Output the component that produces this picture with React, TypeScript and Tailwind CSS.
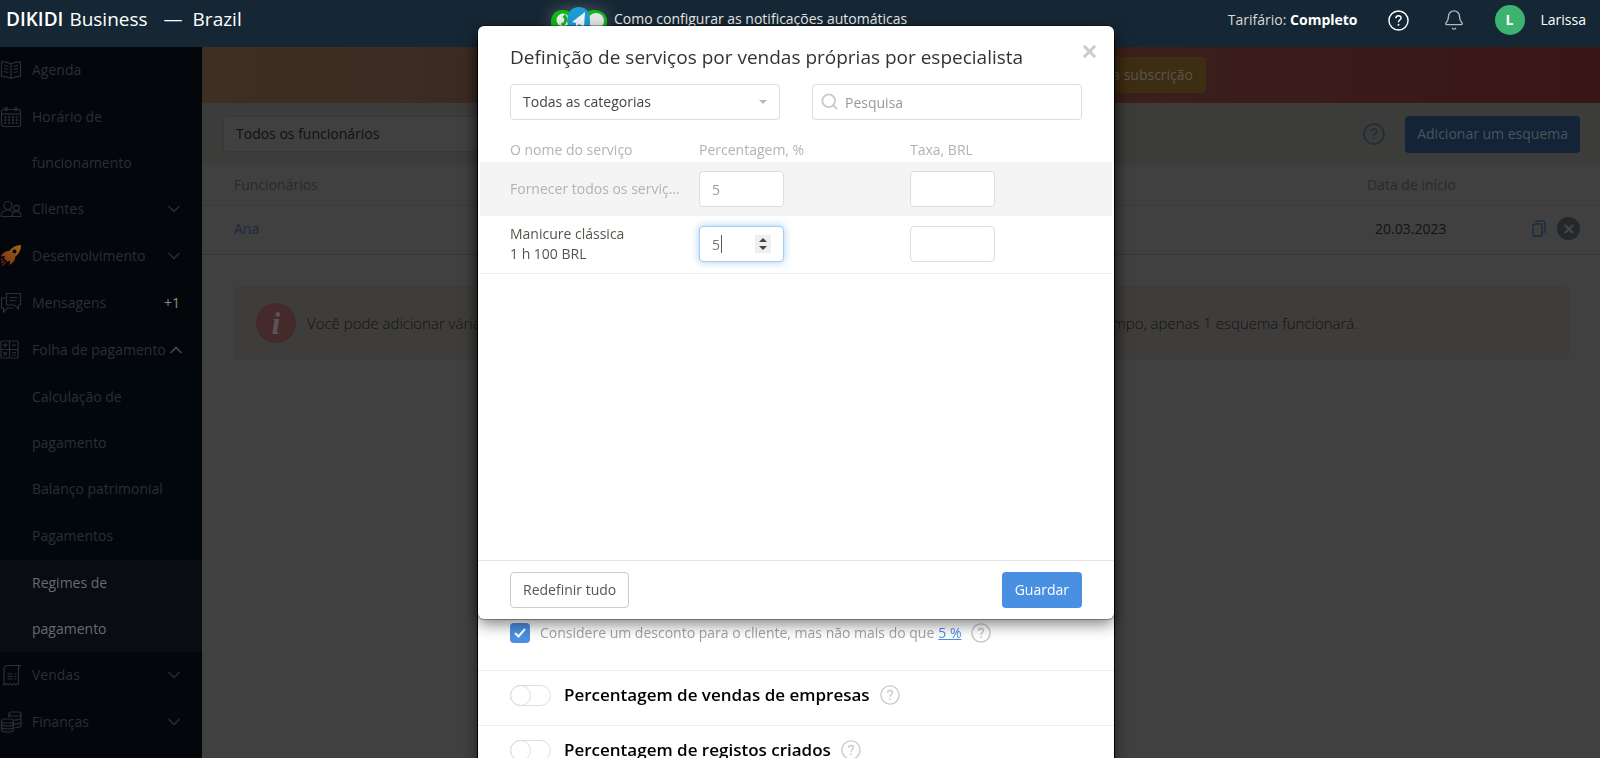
import type { ReactNode } from "react";
import { Bell, ChevronDown, ChevronUp, Search, X } from "lucide-react";

type IconName = "book" | "calendar" | "users" | "rocket" | "chat" | "calc" | "receipt" | "coins";

interface MenuItem {
  label: string;
  icon: IconName;
  wrap?: boolean;
  arrow?: "up" | "down";
  badge?: string;
}

interface SubItem {
  label: string;
  wrap?: boolean;
  active?: boolean;
}

const topItems: MenuItem[] = [
  { label: "Agenda", icon: "book" },
  { label: "Horário de funcionamento", icon: "calendar", wrap: true },
  { label: "Clientes", icon: "users", arrow: "down" },
  { label: "Desenvolvimento", icon: "rocket", arrow: "down" },
  { label: "Mensagens", icon: "chat", badge: "+1" },
  { label: "Folha de pagamento", icon: "calc", arrow: "up" },
];

const subItems: SubItem[] = [
  { label: "Calculação de pagamento", wrap: true },
  { label: "Balanço patrimonial" },
  { label: "Pagamentos" },
  { label: "Regimes de pagamento", wrap: true, active: true },
];

const bottomItems: MenuItem[] = [
  { label: "Vendas", icon: "receipt", arrow: "down" },
  { label: "Finanças", icon: "coins", arrow: "down" },
];

const icons: Record<IconName, ReactNode> = {
  book: (
    <>
      <path d="M11 5C8 3.4 5 2.8 1.5 3v14.500C5 17.300 8 18 11 19.500 14 18 17 17.300 20.500 17.500V3C17 2.800 14 3.400 11 5zM11 5v14" />
      <path d="M4 6.500l4.500 1M4 9.500l4.500 1M4 12.500l4.500 1M18 6.500l-4.500 1M18 9.500l-4.500 1M18 12.500l-4.500 1" />
    </>
  ),
  calendar: (
    <>
      <rect x="1.500" y="3.500" width="19" height="17" rx="2" />
      <path d="M1.500 8h19" />
      <circle cx="6" cy="3" r="1.500" />
      <circle cx="16" cy="3" r="1.500" />
      <path d="M4.500 11h13M4.500 14h13M4.500 17h13" strokeWidth="1.800" strokeDasharray="1.800 2" />
    </>
  ),
  users: (
    <>
      <circle cx="8" cy="7.500" r="4" />
      <path d="M1 18.500c0-4.500 3-6.500 7-6.500 2.500 0 4 .8 5.200 2.200M1 18.500h11" />
      <circle cx="16.500" cy="10" r="2.800" />
      <path d="M12 18.500c0-3.500 2-5 4.500-5s4.500 1.500 4.500 5z" />
    </>
  ),
  rocket: (
    <>
      <defs>
        <linearGradient id="rocket" x1="1" y1="0" x2="0" y2="1">
          <stop offset="0" stopColor="#a06a10" />
          <stop offset="1" stopColor="#7c2a14" />
        </linearGradient>
      </defs>
      <path
        d="M21 0c-5 0-9 2-12 6-3-.3-6 1.500-8.500 5.500l4.500-.8c-.6 1.200-.8 2-.7 3l2.800 2.800c1 .1 2-.1 3-.7L9.500 20c4-2.200 5.700-5 5.500-8 4-3.200 6-7 6-12zM14.500 4.500a2 2 0 1 1 0 4 2 2 0 0 1 0-4z"
        fill="url(#rocket)"
        fillRule="evenodd"
        stroke="none"
      />
      <path d="M4 15.500l-2.500 2.500M5.500 17l-3 4M1 15l1.500-1.500" stroke="#7c2a14" />
    </>
  ),
  chat: (
    <>
      <path d="M6.500 1.500h14v11.500h-2v4l-4-4h-8z" />
      <path d="M6.500 6H1.500v10h2v4l4-4h6M9.500 5.500h8M9.500 8.500h6" />
    </>
  ),
  calc: (
    <>
      <rect x="1" y="2" width="17" height="17" rx="1" />
      <path d="M9.500 2v17M1 10.500h17M3 6.200h4.500M5.200 4v4.500M12 6.200h4M3.500 13l3.500 3.500M7 13l-3.500 3.500M12 13.500h4M12 16h4" />
    </>
  ),
  receipt: (
    <>
      <path d="M21 1.500H7.500C5 1.500 4 3 4 5v16l2-1.500 2 1.500 2-1.500 2 1.500 2-1.500 2 1.500 2-1.500.5.500V5c0-2 1-3.500 2.500-3.500" />
      <path d="M7.500 10h5M7.500 12.500h5M7.500 15h5M14.500 10h2M14.500 12.500h2M14.500 15h2" />
    </>
  ),
  coins: (
    <>
      <rect x="9" y="1" width="12" height="4" rx="2" />
      <path d="M9 3.500v3M21 3.500v11c0 1-2 2-6 2M21 7c0 1-2 2-7 2M21 11c0 1-2 2-7 2" />
      <rect x="1.500" y="8" width="12" height="4" rx="2" />
      <path d="M1.500 10v9c0 1 2 2 6 2s6-1 6-2v-9M1.500 13c0 1 2 2 6 2s6-1 6-2M1.500 16c0 1 2 2 6 2s6-1 6-2" />
    </>
  ),
};

const SideIcon = ({ name }: { name: IconName }) => (
  <svg viewBox="0 0 22 22" className="w-[22px] h-[22px] mt-3 shrink-0" fill="none" stroke="currentColor" strokeWidth="1.2">
    {icons[name]}
  </svg>
);

const HelpButton = ({ className }: { className: string }) => (
  <button type="button" aria-label="Ajuda" className={`shrink-0 ${className}`}>
    <svg viewBox="0 0 22 22" className="w-full h-full" fill="none" stroke="currentColor" strokeWidth="1.500">
      <circle cx="11" cy="11" r="10" />
      <path d="M8.300 8.600C8.300 7 9.400 6 11 6s2.700 1 2.700 2.400c0 2-2.700 2.300-2.700 4.400" />
      <circle cx="11" cy="15.500" r="1" fill="currentColor" stroke="none" />
    </svg>
  </button>
);

const SideLink = ({ item }: { item: MenuItem }) => (
  <li>
    <a href="#" className={`flex pr-[18px] leading-[46px] ${item.wrap ? "" : "h-[47px]"}`}>
      <SideIcon name={item.icon} />
      <span className={`ml-[10px] ${item.wrap ? "w-[110px]" : "whitespace-nowrap"}`}>{item.label}</span>
      {item.badge && <span className="ml-auto mr-1 text-[#8d8c80] font-medium">{item.badge}</span>}
      {item.arrow === "down" && <ChevronDown className="ml-auto mt-[13px] shrink-0 text-[#282c30]" size={20} strokeWidth={2} />}
      {item.arrow === "up" && <ChevronUp className="ml-auto mt-[13px] shrink-0 text-[#484b4e]" size={20} strokeWidth={2} />}
    </a>
  </li>
);

const Sidebar = () => (
  <nav className="w-[202px] shrink-0 bg-[#03060b] text-[#2b2f33]">
    <ul>
      {topItems.map((item) => (
        <SideLink key={item.label} item={item} />
      ))}
      {subItems.map((item) => (
        <li key={item.label} className={item.active ? "bg-[#090c12] text-[#6a6b6b] font-medium" : "bg-[#01070b]"}>
          <a href="#" className={`block pl-8 leading-[46px] ${item.wrap ? "pr-[60px]" : "h-[47px]"}`}>
            {item.label}
          </a>
        </li>
      ))}
      {bottomItems.map((item) => (
        <SideLink key={item.label} item={item} />
      ))}
    </ul>
  </nav>
);

const Messengers = () => (
  <svg width="58" height="24" viewBox="0 0 58 24" className="shrink-0 drop-shadow-[0_0_8px_rgba(255,255,255,0.25)]">
    <path d="M1 15C1 8 5 3 12 3s13 3 13 12-4 13-12 13S1 23 1 15z" fill="#10b81c" />
    <circle cx="13" cy="13" r="6.500" fill="#e9f3ea" />
    <path d="M15 7c3 3 3 8-1 12l-3-1 .8-2.500 1.400.3c1.300-1.600 1.300-3.500.4-5l-1.500-.3z" fill="#10b81c" />
    <path d="M33 13c0-6 4-10 11-10s13 4 13 11-4 13-12 13-12-5-12-14z" fill="#10b81c" />
    <circle cx="46" cy="14" r="8" fill="#e3e6e3" />
    <path d="M17 15C17 5 22 0 29 0c6 0 11 4 11 14v12H22z" fill="#1d9cd3" />
    <path d="M22 15L35 5l-1 15-5-3-3 3v-4z" fill="#f1f7fa" />
  </svg>
);

const Header = () => (
  <header className="h-[47px] bg-[#152734] flex items-start text-white overflow-hidden">
    <div className="w-[550px] shrink-0 pl-[6px] h-[38px] flex items-center text-[19px] whitespace-nowrap">
      <span className="font-semibold">DIKIDI</span>
      <span className="ml-[6px] font-medium">Business</span>
      <span className="ml-4">—</span>
      <span className="ml-[10px] font-medium">Brazil</span>
    </div>
    <a href="#" className="flex items-start gap-[6px] pt-[7px] text-[#e6e9eb] font-medium whitespace-nowrap">
      <Messengers />
      <span className="leading-6">Como configurar as notificações automáticas</span>
    </a>
    <div className="flex-1 h-10 pr-[14px] flex items-center justify-end whitespace-nowrap">
      <span className="text-[#d6dadd]">
        Tarifário: <b className="font-bold text-white">Completo</b>
      </span>
      <HelpButton className="ml-[30px] w-[21px] h-[21px]" />
      <button type="button" aria-label="Notificações" className="ml-[34px] text-[#b4bbc0]">
        <Bell size={22} strokeWidth={1.5} />
      </button>
      <span className="ml-[30px] w-[30px] h-[30px] rounded-full bg-[#3cb371] flex items-center justify-center font-bold">L</span>
      <span className="ml-4 font-medium">Larissa</span>
    </div>
  </header>
);

const Page = () => (
  <main className="flex-1 min-w-0 bg-[#404040]">
    <div className="h-14 bg-linear-to-r from-[#3d2f24] via-[#3b241f] to-[#391616] flex items-center justify-end pr-[394px]">
      <button type="button" className="h-9 px-[13px] rounded bg-[#3d2d12] text-[#5a544b]">
        Renovar a subscrição
      </button>
    </div>
    <div className="bg-[#3c3c3a] h-[62px] pl-[21px] pr-5 flex items-center justify-between">
      <select
        aria-label="Funcionários"
        className="appearance-none w-[270px] h-9 px-3 rounded border border-[#36373b] bg-[#404040] text-[#101010]"
      >
        <option>Todos os funcionários</option>
      </select>
      <div className="flex items-center gap-5">
        <HelpButton className="w-[22px] h-[22px] text-[#1e2b3a]" />
        <button type="button" className="h-[37px] px-3 rounded bg-[#132439] text-[#4c5358]">
          Adicionar um esquema
        </button>
      </div>
    </div>
    <table className="w-full text-left">
      <thead>
        <tr className="h-10 border-b border-[#3a3a3a] text-[#292a2a]">
          <th className="pl-8 font-normal">Funcionários</th>
          <th className="w-[108px] font-normal">Data de início</th>
          <th className="w-[125px]" />
        </tr>
      </thead>
      <tbody>
        <tr className="h-[49px] border-b border-[#363636]">
          <td className="pl-8 pb-[2px]">
            <a href="#" className="text-[#1b283e]">Ana</a>
          </td>
          <td className="pl-2 pb-[2px] text-[#131313]">20.03.2023</td>
          <td className="pr-5 pb-[2px]">
            <div className="flex items-center justify-end gap-[11px]">
              <button type="button" aria-label="Copiar" className="text-[#1b2b3e]">
                <svg width="14" height="17" viewBox="0 0 14 17" fill="none" stroke="currentColor" strokeWidth="1.400">
                  <rect x="1" y="4" width="9" height="12" rx="1" />
                  <path d="M4 2V1h7.500L13 2.500V12h-1.500" />
                </svg>
              </button>
              <button
                type="button"
                aria-label="Remover"
                className="w-[23px] h-[23px] rounded-full bg-[#24272b] text-[#454545] flex items-center justify-center"
              >
                <X size={14} strokeWidth={4} />
              </button>
            </div>
          </td>
        </tr>
      </tbody>
    </table>
    <div className="mt-[31px] ml-8 mr-[31px] h-[74px] rounded-md border border-[#433937] bg-[#3f3d3b] pl-[21px] flex items-center">
      <span className="w-10 h-10 rounded-full bg-[#452a2b] text-[#5a5454] flex items-center justify-center shrink-0 font-['Liberation_Serif',serif] italic font-bold text-[32px] leading-none">
        i
      </span>
      <p className="ml-[11px] text-[15px] font-light text-[#121212] whitespace-nowrap">
        Você pode adicionar várias opções de pagamento para o mesmo funcionário, mas se as datas coincidirem ao mesmo tempo, apenas 1 esquema funcionará.
      </p>
    </div>
  </main>
);

const SwitchRow = ({ label }: { label: string }) => (
  <div className="border-t border-[#ececee] h-[55px] pl-8 pb-[6px] flex items-center">
    <label className="flex items-center gap-[13px] text-[17px] font-semibold text-black cursor-pointer">
      <input
        type="checkbox"
        role="switch"
        className="appearance-none w-[41px] h-[21px] rounded-full border border-[#dcdce6] bg-white before:block before:w-[21px] before:h-[21px] before:-mt-px before:-ml-px before:rounded-full before:border before:border-[#dcdce6]"
      />
      {label}
    </label>
    <HelpButton className="ml-[10px] w-5 h-5 text-[#c8cccc]" />
  </div>
);

const SchemeDialog = () => (
  <section className="col-start-1 row-start-1 mt-10 bg-white ring-1 ring-black shadow-[0_5px_15px_rgba(0,0,0,0.5)] pt-[577px]">
    <div className="h-[53px] pl-8 pt-[6px] flex items-start">
      <input
        id="discount"
        type="checkbox"
        defaultChecked
        className="appearance-none w-5 h-5 rounded bg-[#4a90e2] bg-[url('data:image/svg+xml,%3Csvg%20xmlns=%22http://www.w3.org/2000/svg%22%20viewBox=%220%200%2020%2020%22%3E%3Cpath%20d=%22M5%2010l3.500%203.500L15%206%22%20fill=%22none%22%20stroke=%22white%22%20stroke-width=%222.200%22/%3E%3C/svg%3E')]"
      />
      <label htmlFor="discount" className="ml-[10px] leading-5 text-[#9fa3a8]">
        Considere um desconto para o cliente, mas não mais do que
      </label>
      <a href="#" className="ml-1 leading-5 text-[#4a90e2] underline">5 %</a>
      <HelpButton className="ml-[9px] w-5 h-5 text-[#c3c6c6]" />
    </div>
    <SwitchRow label="Percentagem de vendas de empresas" />
    <SwitchRow label="Percentagem de registos criados" />
  </section>
);

const inputClass = "block w-[85px] h-9 rounded border border-[#dcdce6] bg-white px-3 text-[#999] outline-none";

const ServicesDialog = () => (
  <section
    role="dialog"
    aria-labelledby="services-title"
    className="col-start-1 row-start-1 self-start mt-[26px] h-[593px] flex flex-col bg-white rounded-md ring-1 ring-black/30 shadow-[0_5px_15px_rgba(0,0,0,0.5)]"
  >
    <div className="flex justify-between pl-8 pr-[15px] pt-4">
      <h2 id="services-title" className="text-[19px] leading-[30px] text-[#333]">
        Definição de serviços por vendas próprias por especialista
      </h2>
      <button type="button" aria-label="Fechar" className="h-4 text-[#ccc]">
        <X size={19} strokeWidth={4} />
      </button>
    </div>
    <div className="grid grid-cols-2 gap-8 px-8 mt-3">
      <div className="relative">
        <select
          aria-label="Categoria"
          className="appearance-none w-full h-9 px-3 rounded border border-[#dcdce6] bg-white text-[#444]"
        >
          <option>Todas as categorias</option>
        </select>
        <span className="absolute right-[13px] top-4 border-x-4 border-t-4 border-x-transparent border-t-[#a9bccf] pointer-events-none" />
      </div>
      <div className="relative">
        <Search className="absolute left-2 top-2 text-[#ccc]" size={19} strokeWidth={2.5} />
        <input
          type="search"
          aria-label="Pesquisa"
          placeholder="Pesquisa"
          className="w-full h-9 pl-8 pr-3 rounded border border-[#dcdce6] bg-white placeholder:text-[#999] outline-none"
        />
      </div>
    </div>
    <div className="mt-[18px] px-[2px]">
      <table className="w-full table-fixed text-left">
        <thead>
          <tr className="h-6 text-[#b0b3b8]">
            <th className="w-[209px] pl-[30px] font-normal">O nome do serviço</th>
            <th className="w-[211px] pl-[10px] font-normal">Percentagem, %</th>
            <th className="pl-[10px] font-normal">Taxa, BRL</th>
          </tr>
        </thead>
        <tbody>
          <tr className="h-[54px] bg-[#f4f4f4]">
            <td className="pl-[30px] pr-1 text-[#b0b3b8]">
              <div className="truncate">Fornecer todos os serviços do especialista</div>
            </td>
            <td className="pl-[10px]">
              <input aria-label="Percentagem para todos" defaultValue="5" className={inputClass} />
            </td>
            <td className="pl-[10px]">
              <input aria-label="Taxa para todos" className={inputClass} />
            </td>
          </tr>
          <tr className="h-[57px] border-b border-[#ececec]">
            <td className="pl-[30px] leading-5 text-[#55554c]">
              Manicure clássica
              <br />1 h 100 BRL
            </td>
            <td className="pl-[10px]">
              <div className="relative w-[85px]">
                <input
                  aria-label="Percentagem, Manicure clássica"
                  inputMode="numeric"
                  defaultValue="5"
                  className="block w-full h-9 rounded border border-[#a3cbf5] shadow-[0_0_8px_rgba(102,175,233,0.6)] bg-white px-3 text-[#777] outline-none"
                />
                <span className="absolute left-[22px] top-[9px] w-px h-[18px] bg-[#555]" />
                <div className="absolute right-[13px] top-[9px] w-4 h-[18px] bg-[#efefef] flex flex-col items-center justify-center gap-1">
                  <button type="button" aria-label="Aumentar" className="border-x-4 border-b-4 border-x-transparent border-b-[#444]" />
                  <button type="button" aria-label="Diminuir" className="border-x-4 border-t-4 border-x-transparent border-t-[#444]" />
                </div>
              </div>
            </td>
            <td className="pl-[10px]">
              <input aria-label="Taxa, Manicure clássica" className={inputClass} />
            </td>
          </tr>
        </tbody>
      </table>
    </div>
    <div className="mt-auto h-[59px] px-8 border-t border-[#e5e5e5] flex items-center justify-between">
      <button type="button" className="h-9 px-3 rounded border border-[#ccc] bg-white text-[#555]">
        Redefinir tudo
      </button>
      <button type="button" className="h-9 px-[13px] rounded bg-[#4a90e2] text-white">
        Guardar
      </button>
    </div>
  </section>
);

export default function App() {
  return (
    <div className="h-screen overflow-hidden flex flex-col bg-[#404040] font-['Open_Sans',sans-serif] text-[14px] leading-5">
      <Header />
      <div className="flex-1 flex min-h-0">
        <Sidebar />
        <Page />
      </div>
      <div className="fixed inset-0 overflow-hidden pr-2 grid grid-cols-[636px] justify-center">
        <SchemeDialog />
        <ServicesDialog />
      </div>
    </div>
  );
}
